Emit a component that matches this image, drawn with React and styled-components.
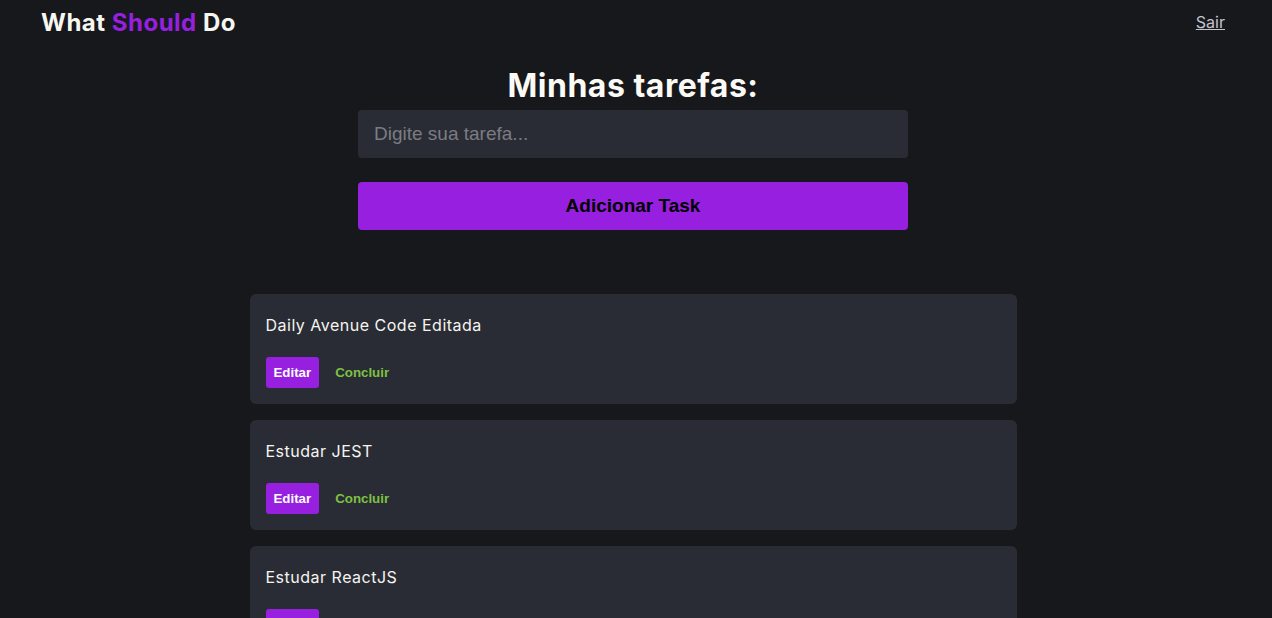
import React from "react";
import styled, { createGlobalStyle } from "styled-components";

const Global = createGlobalStyle`
  html, body { margin: 0; padding: 0; background: #17181c; }
  body { font-family: Inter, "Noto Sans", sans-serif; color: #f5f5f0; }
  * { box-sizing: border-box; }
`;

const Page = styled.div`
  min-height: 618px;
  background: #17181c;
`;

const Header = styled.header`
  height: 44px;
  display: flex;
  align-items: center;
  justify-content: space-between;
  padding: 0 47px 0 41px;
`;

const Logo = styled.h2`
  margin: 0;
  font-family: Inter, sans-serif;
  font-weight: 700;
  font-size: 24px;
  letter-spacing: 0.5px;
  color: #f7f7f2;
`;

const Accent = styled.span`
  color: #9720e0;
`;

const Logout = styled.a`
  font-family: Inter, sans-serif;
  font-size: 16px;
  color: #c4c3d0;
  text-decoration: underline;
  cursor: pointer;
`;

const Main = styled.main`
  display: flex;
  flex-direction: column;
  align-items: center;
  padding: 22px 6px 0 0;
`;

const Title = styled.h1`
  margin: 0 0 5px;
  font-family: Inter, sans-serif;
  font-weight: 700;
  font-size: 32px;
  line-height: 40px;
  letter-spacing: 0.5px;
  color: #fbfaf5;
`;

const Form = styled.div`
  width: 550px;
  margin-top: -1px;
  display: flex;
  flex-direction: column;
  gap: 24px;
`;

const Input = styled.input`
  height: 48px;
  border: none;
  border-radius: 4px;
  background: #2a2c35;
  padding: 0 16px;
  font-family: "Liberation Sans", Arial, sans-serif;
  font-size: 19px;
  color: #eee;
  outline: none;
  &::placeholder { color: #7b7c82; }
`;

const AddButton = styled.button`
  height: 48px;
  border: none;
  border-radius: 4px;
  background: #971fe0;
  font-family: "Liberation Sans", Arial, sans-serif;
  font-weight: 700;
  font-size: 19px;
  color: #000;
  cursor: pointer;
`;

const List = styled.ul`
  list-style: none;
  margin: 64px 0 0;
  padding: 0;
  width: 767px;
  display: flex;
  flex-direction: column;
  gap: 16px;
`;

const Card = styled.li`
  background: #2a2c35;
  border-radius: 6px;
  padding: 16px;
`;

const TaskName = styled.p`
  margin: 4px 0 21px;
  font-family: Inter, sans-serif;
  font-size: 16px;
  line-height: 22px;
  letter-spacing: 0.5px;
  color: #f5f5f0;
`;

const Actions = styled.div`
  display: flex;
  align-items: center;
  gap: 16px;
`;

const ActionButton = styled.button`
  height: 31px;
  padding: 0 ${(p) => (p.$primary ? "8px" : "0")};
  min-width: ${(p) => (p.$primary ? "53px" : "0")};
  border: none;
  border-radius: 3px;
  background: ${(p) => (p.$primary ? "#971fe0" : "transparent")};
  color: ${(p) => (p.$primary ? "#ffffff" : "#7cc142")};
  font-family: "Liberation Sans", Arial, sans-serif;
  font-weight: 700;
  font-size: 13.3px;
  cursor: pointer;
`;

const tasks = ["Daily Avenue Code Editada", "Estudar JEST", "Estudar ReactJS"];

export default function App() {
  return (
    <Page>
      <Global />
      <Header>
        <Logo>
          What <Accent>Should</Accent> Do
        </Logo>
        <Logout>Sair</Logout>
      </Header>
      <Main>
        <Title>Minhas tarefas:</Title>
        <Form>
          <Input placeholder="Digite sua tarefa..." />
          <AddButton>Adicionar Task</AddButton>
        </Form>
        <List>
          {tasks.map((t) => (
            <Card key={t}>
              <TaskName>{t}</TaskName>
              <Actions>
                <ActionButton $primary>Editar</ActionButton>
                <ActionButton>Concluir</ActionButton>
              </Actions>
            </Card>
          ))}
        </List>
      </Main>
    </Page>
  );
}
